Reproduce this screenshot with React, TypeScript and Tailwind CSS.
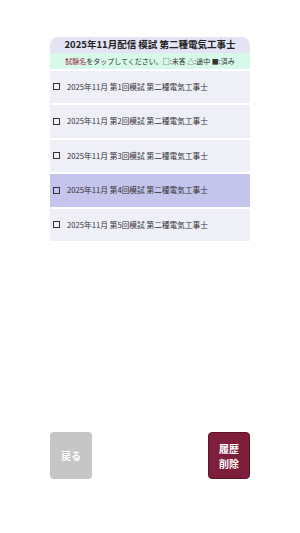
const exams = [1, 2, 3, 4, 5];

export default function App() {
  return (
    <div
      className="min-h-screen w-full bg-white flex flex-col items-center pt-[37px] pb-[54px]"
      style={{ fontFamily: '"Noto Sans CJK JP", "Noto Sans", sans-serif' }}
    >
      <div className="w-[200px] flex flex-col">
        {/* Title */}
        <div className="h-[16px] rounded-t-[8px] bg-[#e4e4f4] flex items-center justify-center text-[9.5px] font-bold text-[#222] leading-none">
          2025年11月配信 模試 第二種電気工事士
        </div>

        {/* Hint */}
        <div className="h-[16px] bg-[#d8f8ea] flex items-center justify-center text-[7px] text-[#333] leading-none whitespace-nowrap">
          <span className="text-[#a0304a]">試験名</span>をタップしてください。□:未答 △:途中 ■:済み
        </div>

        {/* Exam list */}
        <div className="flex flex-col gap-[2px] mt-[1.5px]">
          {exams.map((n) => (
            <div
              key={n}
              className={
                n === 4
                  ? "h-[32.5px] bg-[#c4c4ec] flex items-center px-[2px] text-[7.7px] text-[#333]"
                  : "h-[32.5px] bg-[#efeff8] flex items-center px-[2px] text-[7.7px] text-[#333]"
              }
            >
              <span className="w-[7px] h-[7px] border border-[#333] ml-[1px] mr-[7px] shrink-0" />
              <span className="leading-none whitespace-nowrap">
                2025年11月 第{n}回模試 第二種電気工事士
              </span>
            </div>
          ))}
        </div>
      </div>

      <div className="flex-1" />

      {/* Buttons */}
      <div className="w-[200px] flex justify-between">
        <button className="w-[42px] h-[47px] rounded-[4px] bg-[#c6c6c6] text-white text-[10px] font-bold flex items-center justify-center">
          戻る
        </button>
        <button className="w-[42px] h-[47px] rounded-[4px] bg-[#7d1f3b] border border-[#5e1229] text-white text-[10px] font-bold flex flex-col items-center justify-center leading-[15px]">
          <span>履歴</span>
          <span>削除</span>
        </button>
      </div>
    </div>
  );
}
